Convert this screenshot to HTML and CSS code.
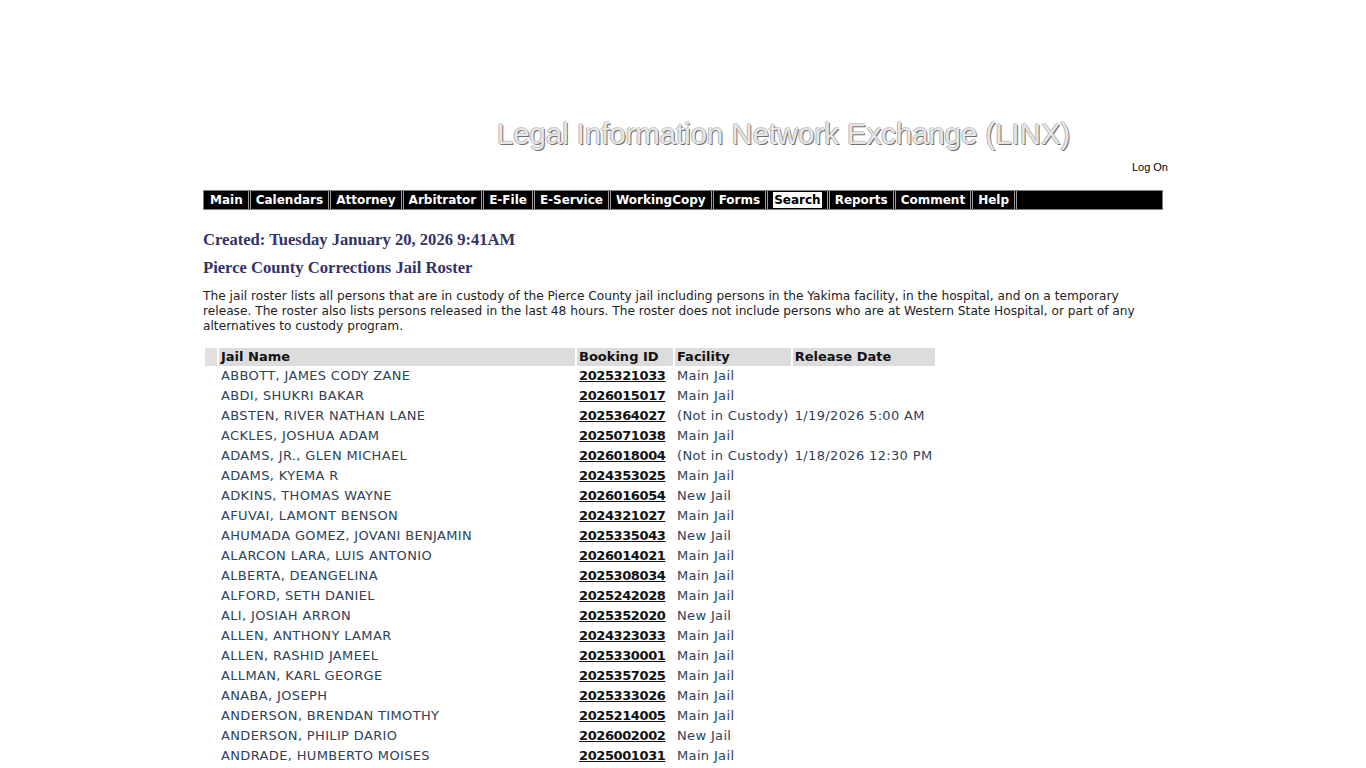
FILE: index.html
```html
<!DOCTYPE html>
<html>
<head>
<meta charset="utf-8">
<title>LINX - Jail Roster</title>
<link rel="stylesheet" href="styles.css">
</head>
<body>
<div class="page">
  <div class="banner">
    <div class="title">Legal Information Network Exchange (LINX)</div>
  </div>
  <div class="logon-row"><a class="logon" href="#">Log On</a></div>
  <div class="nav">
    <a class="nav-item" href="#">Main</a>
    <a class="nav-item" href="#">Calendars</a>
    <a class="nav-item" href="#">Attorney</a>
    <a class="nav-item" href="#">Arbitrator</a>
    <a class="nav-item" href="#">E-File</a>
    <a class="nav-item" href="#">E-Service</a>
    <a class="nav-item" href="#">WorkingCopy</a>
    <a class="nav-item" href="#">Forms</a>
    <a class="nav-item active" href="#"><span class="active-label">Search</span></a>
    <a class="nav-item" href="#">Reports</a>
    <a class="nav-item" href="#">Comment</a>
    <a class="nav-item" href="#">Help</a>
  </div>

  <h2 class="created">Created: Tuesday January 20, 2026 9:41AM</h2>
  <h2 class="roster-title">Pierce County Corrections Jail Roster</h2>
  <p class="intro">The jail roster lists all persons that are in custody of the Pierce County jail including persons in the Yakima facility, in the hospital, and on a temporary release. The roster also lists persons released in the last 48 hours. The roster does not include persons who are at Western State Hospital, or part of any alternatives to custody program.</p>

  <table class="roster">
    <thead>
      <tr>
        <th class="c-pad"></th>
        <th class="c-name">Jail Name</th>
        <th class="c-id">Booking ID</th>
        <th class="c-fac">Facility</th>
        <th class="c-rel">Release Date</th>
      </tr>
    </thead>
    <tbody>
      <tr><td></td><td>ABBOTT, JAMES CODY ZANE</td><td><a href="#">2025321033</a></td><td>Main Jail</td><td></td></tr>
      <tr><td></td><td>ABDI, SHUKRI BAKAR</td><td><a href="#">2026015017</a></td><td>Main Jail</td><td></td></tr>
      <tr><td></td><td>ABSTEN, RIVER NATHAN LANE</td><td><a href="#">2025364027</a></td><td>(Not in Custody)</td><td>1/19/2026 5:00 AM</td></tr>
      <tr><td></td><td>ACKLES, JOSHUA ADAM</td><td><a href="#">2025071038</a></td><td>Main Jail</td><td></td></tr>
      <tr><td></td><td>ADAMS, JR., GLEN MICHAEL</td><td><a href="#">2026018004</a></td><td>(Not in Custody)</td><td>1/18/2026 12:30 PM</td></tr>
      <tr><td></td><td>ADAMS, KYEMA R</td><td><a href="#">2024353025</a></td><td>Main Jail</td><td></td></tr>
      <tr><td></td><td>ADKINS, THOMAS WAYNE</td><td><a href="#">2026016054</a></td><td>New Jail</td><td></td></tr>
      <tr><td></td><td>AFUVAI, LAMONT BENSON</td><td><a href="#">2024321027</a></td><td>Main Jail</td><td></td></tr>
      <tr><td></td><td>AHUMADA GOMEZ, JOVANI BENJAMIN</td><td><a href="#">2025335043</a></td><td>New Jail</td><td></td></tr>
      <tr><td></td><td>ALARCON LARA, LUIS ANTONIO</td><td><a href="#">2026014021</a></td><td>Main Jail</td><td></td></tr>
      <tr><td></td><td>ALBERTA, DEANGELINA</td><td><a href="#">2025308034</a></td><td>Main Jail</td><td></td></tr>
      <tr><td></td><td>ALFORD, SETH DANIEL</td><td><a href="#">2025242028</a></td><td>Main Jail</td><td></td></tr>
      <tr><td></td><td>ALI, JOSIAH ARRON</td><td><a href="#">2025352020</a></td><td>New Jail</td><td></td></tr>
      <tr><td></td><td>ALLEN, ANTHONY LAMAR</td><td><a href="#">2024323033</a></td><td>Main Jail</td><td></td></tr>
      <tr><td></td><td>ALLEN, RASHID JAMEEL</td><td><a href="#">2025330001</a></td><td>Main Jail</td><td></td></tr>
      <tr><td></td><td>ALLMAN, KARL GEORGE</td><td><a href="#">2025357025</a></td><td>Main Jail</td><td></td></tr>
      <tr><td></td><td>ANABA, JOSEPH</td><td><a href="#">2025333026</a></td><td>Main Jail</td><td></td></tr>
      <tr><td></td><td>ANDERSON, BRENDAN TIMOTHY</td><td><a href="#">2025214005</a></td><td>Main Jail</td><td></td></tr>
      <tr><td></td><td>ANDERSON, PHILIP DARIO</td><td><a href="#">2026002002</a></td><td>New Jail</td><td></td></tr>
      <tr><td></td><td>ANDRADE, HUMBERTO MOISES</td><td><a href="#">2025001031</a></td><td>Main Jail</td><td></td></tr>
    </tbody>
  </table>
</div>
</body>
</html>
```

FILE: styles.css
```css
html, body {
  margin: 0;
  padding: 0;
  background: #ffffff;
}

body {
  font-family: "DejaVu Sans", Verdana, sans-serif;
  font-size: 13px;
  color: #222222;
}

.page {
  width: 960px;
  margin: 0 auto;
}

.banner {
  height: 159px;
  display: flex;
  align-items: flex-start;
  padding-left: 294px;
  box-sizing: border-box;
  padding-top: 118px;
}

.title {
  font-family: "Liberation Sans", Arial, sans-serif;
  font-size: 29.3px;
  line-height: 32px;
  color: #e6e6e6;
  text-shadow: 1px 1px 0 #707070, -1px 0 0 #b8b8b8, 0 -1px 0 #cccccc;
  white-space: nowrap;
}

.logon-row {
  display: flex;
  justify-content: flex-end;
  margin-right: -5px;
  height: 16px;
}

.logon {
  font-family: "Liberation Sans", Arial, sans-serif;
  font-size: 11px;
  line-height: 16px;
  color: #000000;
  text-decoration: none;
}

.nav {
  margin-top: 15px;
  height: 20px;
  background: #000000;
  border: 1px solid #808080;
  box-sizing: border-box;
  display: flex;
  align-items: stretch;
  padding-left: 1px;
}

.nav-item {
  display: flex;
  align-items: center;
  padding: 0 5px 0 5px;
  border-right: 3px double #9a9a9a;
  color: #ffffff;
  font-weight: bold;
  font-size: 12px;
  text-decoration: none;
  line-height: 16px;
}

.active-label {
  background: #ffffff;
  color: #000000;
  padding: 0 1px;
}

.created,
.roster-title {
  font-family: "Liberation Serif", Georgia, serif;
  font-weight: bold;
  font-size: 16.6px;
  color: #333366;
  margin: 0;
  line-height: 18px;
}

.created {
  margin-top: 21px;
}

.roster-title {
  margin-top: 10px;
}

.intro {
  margin: 12px 0 0 0;
  line-height: 15px;
  font-size: 12.2px;
  color: #222222;
}

.roster {
  margin-top: 14px;
  border-collapse: separate;
  border-spacing: 2px 0;
  font-size: 13px;
}

.roster th {
  background: #dcdcdc;
  text-align: left;
  font-weight: bold;
  color: #111111;
  height: 18px;
  padding: 0 2px;
  line-height: 18px;
}

.roster th.c-pad {
  width: 8px;
  background: #e4dede;
}

.roster th.c-name { width: 352px; }
.roster th.c-id { width: 92px; }
.roster th.c-fac { width: 110px; }
.roster th.c-rel { width: 138px; }

.roster td {
  height: 20px;
  padding: 0 2px;
  line-height: 20px;
  color: #2e4257;
  white-space: nowrap;
  letter-spacing: 0.35px;
}

.roster td a {
  color: #111111;
  font-weight: bold;
  text-decoration: underline;
  letter-spacing: -0.4px;
}
```
